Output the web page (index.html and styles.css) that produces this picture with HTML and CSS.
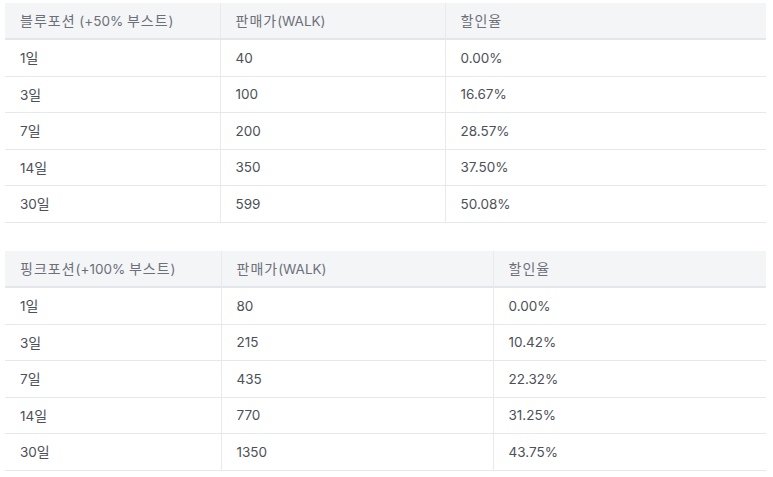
FILE: index.html
```html
<!DOCTYPE html>
<html lang="ko">
<head>
<meta charset="utf-8">
<link rel="stylesheet" href="styles.css">
</head>
<body>
<div class="page">
  <table class="price t1">
    <colgroup><col class="c1"><col class="c2"><col class="c3"></colgroup>
    <thead>
      <tr><th><span class="ko">블루포션</span> (+50% <span class="ko">부스트</span>)</th><th><span class="ko">판매가</span>(WALK)</th><th><span class="ko">할인율</span></th></tr>
    </thead>
    <tbody>
      <tr><td>1<span class="ko">일</span></td><td>40</td><td>0.00%</td></tr>
      <tr><td>3<span class="ko">일</span></td><td>100</td><td>16.67%</td></tr>
      <tr><td>7<span class="ko">일</span></td><td>200</td><td>28.57%</td></tr>
      <tr><td>14<span class="ko">일</span></td><td>350</td><td>37.50%</td></tr>
      <tr><td>30<span class="ko">일</span></td><td>599</td><td>50.08%</td></tr>
    </tbody>
  </table>
  <table class="price t2">
    <colgroup><col class="c1"><col class="c2"><col class="c3"></colgroup>
    <thead>
      <tr><th><span class="ko">핑크포션</span>(+100% <span class="ko">부스트</span>)</th><th><span class="ko">판매가</span>(WALK)</th><th><span class="ko">할인율</span></th></tr>
    </thead>
    <tbody>
      <tr><td>1<span class="ko">일</span></td><td>80</td><td>0.00%</td></tr>
      <tr><td>3<span class="ko">일</span></td><td>215</td><td>10.42%</td></tr>
      <tr><td>7<span class="ko">일</span></td><td>435</td><td>22.32%</td></tr>
      <tr><td>14<span class="ko">일</span></td><td>770</td><td>31.25%</td></tr>
      <tr><td>30<span class="ko">일</span></td><td>1350</td><td>43.75%</td></tr>
    </tbody>
  </table>
</div>
</body>
</html>
```
FILE: styles.css
```css
html, body {
  margin: 0;
  background: #ffffff;
}
.page {
  padding: 3px 7px 0 5px;
  display: flex;
  flex-direction: column;
  gap: 28.5px;
  font-family: Inter, "Noto Sans CJK KR", sans-serif;
  font-size: 13.5px;
  line-height: 18px;
}
.ko {
  font-family: "Noto Sans CJK KR", sans-serif;
  font-size: 14px;
  letter-spacing: 1px;
}
.price {
  width: 100%;
  border-collapse: collapse;
  table-layout: fixed;
}
.price th, .price td {
  text-align: left;
  padding: 0 15px;
  font-weight: 400;
  white-space: nowrap;
}
.price th + th, .price td + td {
  border-left: 1px solid #e8eaee;
}
.price thead th {
  background: #f4f5f7;
  color: #6d7079;
  height: 35px;
  border-bottom: 2px solid #e3e6eb;
}
.price tbody td {
  color: #4d5058;
  height: 35.5px;
  border-bottom: 1px solid #e6e8ec;
}
.t1 .c1 { width: 215px; }
.t1 .c2 { width: 225px; }
.t2 .c1 { width: 216px; }
.t2 .c2 { width: 272px; }
```
